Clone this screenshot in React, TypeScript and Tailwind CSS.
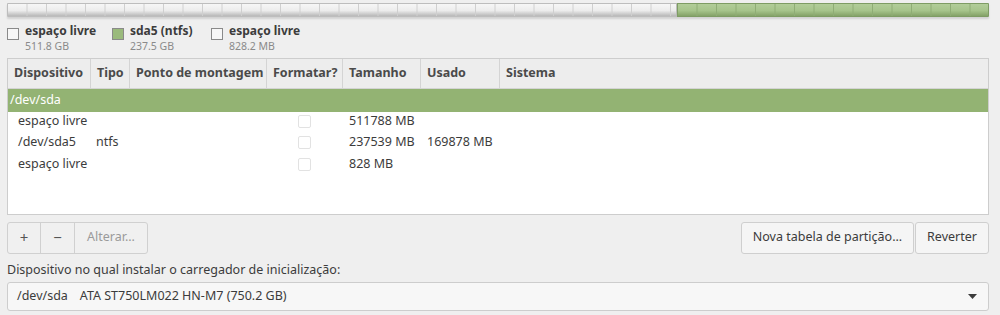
import React from "react";

const cols = [
  { label: "Dispositivo", w: "w-[83px]" },
  { label: "Tipo", w: "w-[39px]" },
  { label: "Ponto de montagem", w: "w-[137px]" },
  { label: "Formatar?", w: "w-[76px]" },
  { label: "Tamanho", w: "w-[78px]" },
  { label: "Usado", w: "w-[79px]" },
  { label: "Sistema", w: "flex-1" },
];

const rows = [
  { dev: "espaço livre", tipo: "", size: "511788 MB", used: "" },
  { dev: "/dev/sda5", tipo: "ntfs", size: "237539 MB", used: "169878 MB" },
  { dev: "espaço livre", tipo: "", size: "828 MB", used: "" },
];

function Legend({ swatch, name, size, w }: { swatch: string; name: string; size: string; w: string }) {
  return (
    <div className={`flex items-start gap-[6px] ${w}`}>
      <div className={`mt-[3px] h-[12px] w-[12px] border border-[#8a8a8a] ${swatch}`} />
      <div className="flex flex-col leading-none">
        <span className="text-[12px] font-bold text-[#3c3c3c]">{name}</span>
        <span className="mt-[4px] text-[10.5px] text-[#8a8a8a]">{size}</span>
      </div>
    </div>
  );
}

export default function App() {
  return (
    <div
      className="h-[315px] w-[1000px] overflow-hidden bg-[#efefef] px-[7px] pt-[3px] text-[#3c3c3c]"
      style={{ fontFamily: '"Noto Sans", "Open Sans", sans-serif' }}
    >
      {/* Partition bar */}
      <div className="flex h-[14px] w-[982px] overflow-hidden rounded-[1px] shadow-[0_2px_2px_rgba(0,0,0,0.12)]">
        <div className="w-[670px] border border-[#bdbdbd] bg-[linear-gradient(to_right,transparent_18.5px,#cfcfcf_18.5px,#cfcfcf_19.5px),linear-gradient(to_bottom,#f6f6f6,#ececec_55%,#b8b8b8)] bg-[length:19.5px_100%,100%_100%]" />
        <div className="flex-1 border border-[#7e9c64] bg-[linear-gradient(to_right,transparent_18.5px,#8fad75_18.5px,#8fad75_19.5px),linear-gradient(to_bottom,#b2cd99,#a6c48b_55%,#84a268)] bg-[length:19.5px_100%,100%_100%]" />
      </div>

      {/* Legend */}
      <div className="mt-[8px] flex">
        <Legend w="w-[105px]" swatch="bg-[#f7f7f7]" name="espaço livre" size="511.8 GB" />
        <Legend w="w-[99px]" swatch="bg-[#9aba7c] border-[#7f9c66]" name="sda5 (ntfs)" size="237.5 GB" />
        <Legend w="w-[120px]" swatch="bg-[#f7f7f7]" name="espaço livre" size="828.2 MB" />
      </div>

      {/* Table */}
      <div className="mt-[6px] h-[157px] w-[982px] border border-[#cdcdcd] bg-white text-[12.5px]">
        <div className="flex h-[30px] border-b border-[#d4d4d4] bg-[#ededed]">
          {cols.map((c, i) => (
            <div
              key={c.label}
              className={`flex items-center pl-[6px] font-bold text-[#4a4a4a] ${c.w} ${i < cols.length - 1 ? "border-r border-[#d4d4d4]" : ""}`}
            >
              {c.label}
            </div>
          ))}
        </div>
        <div className="flex h-[23px] items-center bg-[#93b373] pl-[2px] text-white">/dev/sda</div>
        {rows.map((r, i) => (
          <div key={i} className="flex h-[21.5px] items-center pb-[2px]">
            <div className="w-[83px] pl-[10px]">{r.dev}</div>
            <div className="w-[39px] pl-[5px]">{r.tipo}</div>
            <div className="w-[137px]" />
            <div className="flex w-[76px] justify-center pr-[2px]">
              <div className="h-[13px] w-[13px] rounded-[2px] border border-[#e2e2e2] bg-white" />
            </div>
            <div className="w-[78px] pl-[6px]">{r.size}</div>
            <div className="w-[79px] pl-[6px]">{r.used}</div>
          </div>
        ))}
      </div>

      {/* Buttons */}
      <div className="mt-[7px] flex h-[32px] w-[982px] text-[12.5px]">
        <div className="flex overflow-hidden rounded-[3px] border border-[#d0d0d0] bg-[#f0f0f0]">
          <div className="flex w-[33px] items-center justify-center border-r border-[#d0d0d0] text-[15px] text-[#555]">+</div>
          <div className="flex w-[34px] items-center justify-center border-r border-[#d0d0d0] text-[15px] text-[#555]">−</div>
          <div className="flex w-[72px] items-center justify-center text-[#9a9a9a]">Alterar...</div>
        </div>
        <div className="flex-1" />
        <div className="flex w-[173px] items-center justify-center rounded-[3px] border border-[#cfcfcf] bg-[#f5f5f5]">
          Nova tabela de partição...
        </div>
        <div className="ml-[1px] flex w-[74px] items-center justify-center rounded-[3px] border border-[#cfcfcf] bg-[#f5f5f5]">
          Reverter
        </div>
      </div>

      <div className="mt-[10px] text-[12.5px] leading-none">Dispositivo no qual instalar o carregador de inicialização:</div>

      <div className="mt-[6px] flex h-[29px] w-[982px] items-center rounded-[3px] border border-[#cdcdcd] bg-[#f7f7f7] pl-[9px] pr-[11px] text-[12.5px]">
        <span>/dev/sda</span>
        <span className="ml-[12px]">ATA ST750LM022 HN-M7 (750.2 GB)</span>
        <div className="flex-1" />
        <svg width="9" height="5" viewBox="0 0 9 5">
          <path d="M0 0 L9 0 L4.5 5 Z" fill="#3c3c3c" />
        </svg>
      </div>
    </div>
  );
}
